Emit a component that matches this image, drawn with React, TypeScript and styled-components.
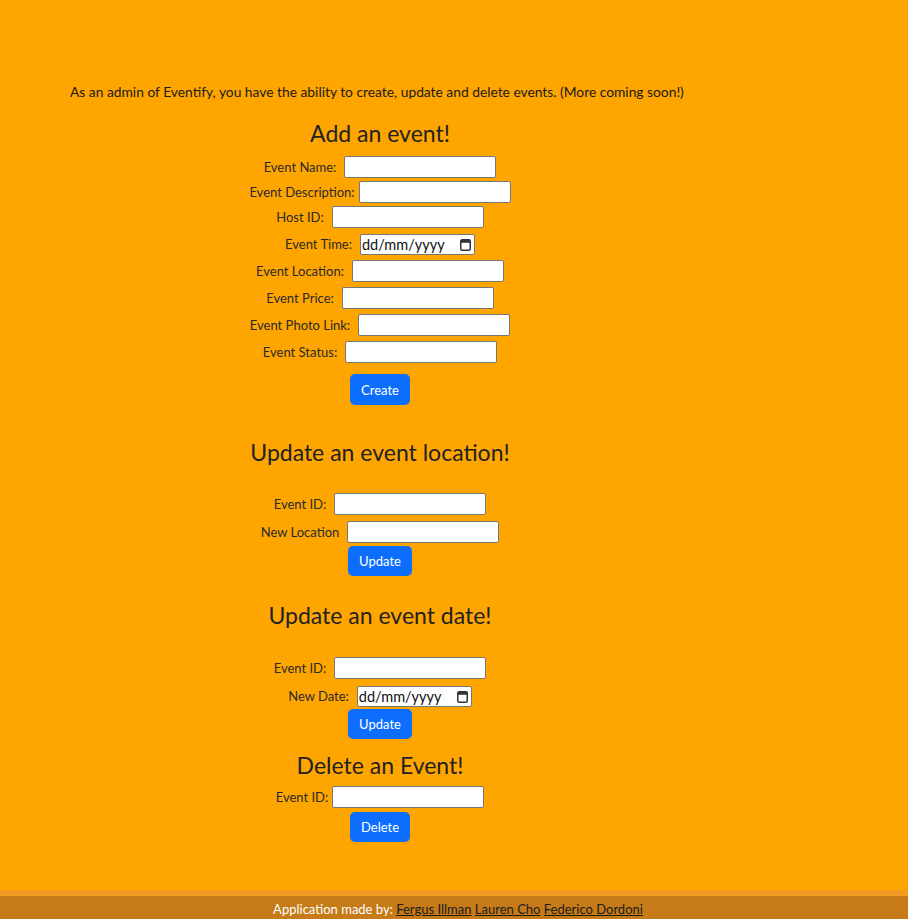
import React from "react";
import styled, { createGlobalStyle } from "styled-components";

const GlobalStyle = createGlobalStyle`
  html, body { margin: 0; padding: 0; background: #ffa500; }
  body { font-family: Lato, "Open Sans", sans-serif; color: #212529; }
  * { box-sizing: border-box; }
`;

const Page = styled.div`
  min-height: 919px;
  display: flex;
  flex-direction: column;
  background: #ffa500;
`;

const Main = styled.main`
  flex: 1;
  padding: 84px 0 0 70px;
`;

const Column = styled.div`
  width: 620px;
  display: flex;
  flex-direction: column;
  align-items: center;
`;

const Intro = styled.p`
  align-self: stretch;
  margin: 0;
  font-size: 13.8px;
  line-height: 16px;
  text-align: left;
  white-space: nowrap;
  color: #1a1a1a;
`;

const Heading = styled.h2<{ $top: number; $bottom: number }>`
  margin: ${(p) => p.$top}px 0 ${(p) => p.$bottom}px;
  font-size: 23px;
  line-height: 26px;
  font-weight: 400;
  color: #222;
`;

const Row = styled.div<{ $top?: number; $gap?: number }>`
  display: flex;
  align-items: center;
  height: 22px;
  gap: ${(p) => p.$gap ?? 8}px;
  margin-top: ${(p) => p.$top ?? 0}px;
`;

const Label = styled.label`
  font-size: 13px;
  color: #2a2a2a;
  white-space: nowrap;
`;

const TextInput = styled.input`
  width: 152px;
  height: 22px;
  border: 1px solid #767676;
  border-radius: 2px;
  background: #fff;
  padding: 1px 2px;
  font: 13px Lato, sans-serif;
`;

const DateBox = styled.div<{ $w: number }>`
  position: relative;
  width: ${(p) => p.$w}px;
  height: 21px;
`;

const DateInput = styled.input`
  width: 100%;
  height: 100%;
  border: 1px solid #767676;
  border-radius: 2px;
  background: #fff;
  padding: 0 18px 0 1px;
  font: 14.5px Lato, sans-serif;
  color: #111;
  &::placeholder {
    color: #111;
    opacity: 1;
  }
`;

const CalendarIcon = styled.svg`
  position: absolute;
  right: 4px;
  top: 4px;
  pointer-events: none;
`;

const Button = styled.button<{ $top: number; $h?: number }>`
  margin-top: ${(p) => p.$top}px;
  height: ${(p) => p.$h ?? 30}px;
  padding: 0 11px;
  border: none;
  border-radius: 5px;
  background: #0d6efd;
  color: #fff;
  font: 13px Lato, sans-serif;
  cursor: pointer;
`;

const Footer = styled.footer`
  border-top: 6px solid #f39c22;
  background: #c67a18;
  color: #fff;
  text-align: center;
  font-size: 13px;
  line-height: 16px;
  padding: 5px 0 2px 8px;
`;

const Credit = styled.a`
  color: #1c1c1c;
  text-decoration: underline;
`;

type FieldProps = { label: string; top?: number; gap?: number };

const TextField = ({ label, top, gap }: FieldProps) => (
  <Row $top={top} $gap={gap}>
    <Label>{label}</Label>
    <TextInput type="text" />
  </Row>
);

const DateField = ({ label, top, gap, width }: FieldProps & { width: number }) => (
  <Row $top={top} $gap={gap}>
    <Label>{label}</Label>
    <DateBox $w={width}>
      <DateInput type="text" placeholder="dd/mm/yyyy" />
      <CalendarIcon width="11" height="13" viewBox="0 0 11 13">
        <rect x="0.75" y="1.75" width="9.5" height="10.5" rx="1.5" fill="none" stroke="#333" strokeWidth="1.5" />
        <rect x="0.75" y="1.75" width="9.5" height="3" fill="#333" />
      </CalendarIcon>
    </DateBox>
  </Row>
);

export default function App() {
  return (
    <>
      <GlobalStyle />
      <Page>
        <Main>
          <Column>
            <Intro>
              As an admin of Eventify, you have the ability to create, update and delete events. (More coming soon!)
            </Intro>

            <Heading $top={20} $bottom={10}>Add an event!</Heading>
            <TextField label="Event Name:" />
            <TextField label="Event Description:" top={3} gap={4} />
            <TextField label="Host ID:" top={3} />
            <DateField label="Event Time:" top={5} width={115} />
            <TextField label="Event Location:" top={5} />
            <TextField label="Event Price:" top={5} />
            <TextField label="Event Photo Link:" top={5} />
            <TextField label="Event Status:" top={5} />
            <Button $top={11} $h={31}>Create</Button>

            <Heading $top={34} $bottom={28}>Update an event location!</Heading>
            <TextField label="Event ID:" />
            <TextField label="New Location" top={6} />
            <Button $top={3}>Update</Button>

            <Heading $top={26} $bottom={29}>Update an event date!</Heading>
            <TextField label="Event ID:" />
            <DateField label="New Date:" top={6} width={115} />
            <Button $top={2}>Update</Button>

            <Heading $top={13} $bottom={8}>Delete an Event!</Heading>
            <TextField label="Event ID:" gap={4} />
            <Button $top={4}>Delete</Button>
          </Column>
        </Main>
        <Footer>
          Application made by: <Credit href="#">Fergus Illman</Credit>{" "}
          <Credit href="#">Lauren Cho</Credit> <Credit href="#">Federico Dordoni</Credit>
        </Footer>
      </Page>
    </>
  );
}
